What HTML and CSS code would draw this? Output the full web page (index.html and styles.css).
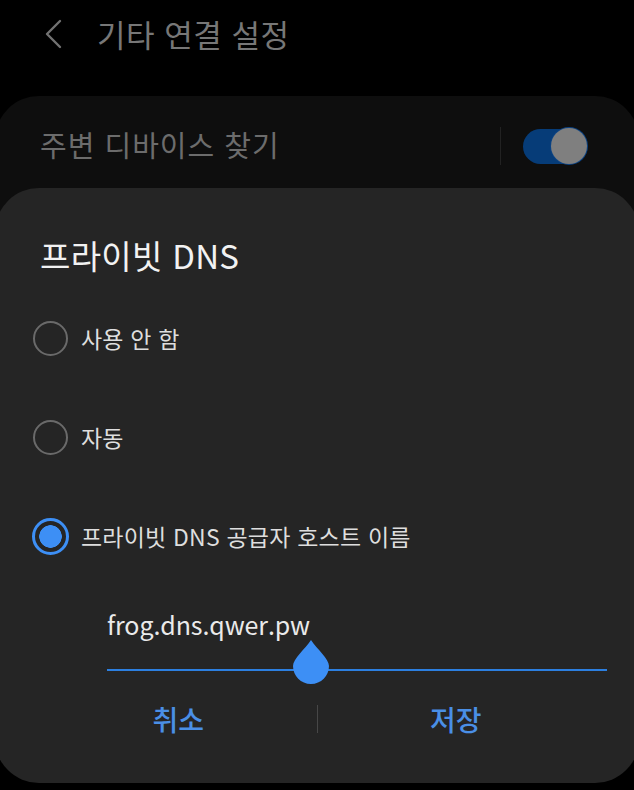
FILE: index.html
```html
<!DOCTYPE html>
<html lang="ko">
<head>
  <meta charset="utf-8" />
  <title>기타 연결 설정</title>
  <link rel="stylesheet" href="styles.css">
</head>

<body>
  <div class="screen">
    <!-- 상단 헤더 -->
    <div class="header">
      <svg class="back" width="22" height="32" viewBox="0 0 22 32">
        <path d="M18 3 L5 16 L18 29" fill="none" stroke="#727272" stroke-width="2.4" stroke-linecap="round" stroke-linejoin="round" />
      </svg>
      <span class="header-title">기타 연결 설정</span>
    </div>

    <!-- 뒤쪽 설정 카드 -->
    <div class="card">
      <div class="card-row">
        <span class="card-label">주변 디바이스 찾기</span>
        <div class="divider"></div>
        <div class="toggle">
          <div class="thumb"></div>
        </div>
      </div>
    </div>

    <!-- 프라이빗 DNS 대화상자 -->
    <div class="sheet-wrap">
      <div class="dialog">
        <div class="dialog-title">프라이빗 DNS</div>

        <div class="options">
          <div class="option">
            <span class="radio"></span>
            <span class="option-label">사용 안 함</span>
          </div>
          <div class="option">
            <span class="radio"></span>
            <span class="option-label">자동</span>
          </div>
          <div class="option">
            <span class="radio checked"></span>
            <span class="option-label">프라이빗 DNS 공급자 호스트 이름</span>
          </div>
        </div>

        <div class="field">
          <span class="field-text">frog.dns.qwer.pw</span>
          <svg class="handle" width="36" height="44" viewBox="0 0 36 44">
            <path d="M18 0 C24 9 36 19 36 26 C36 36 28 44 18 44 C8 44 0 36 0 26 C0 19 12 9 18 0 Z" fill="#3d8ff5" />
          </svg>
        </div>

        <div class="actions">
          <button class="action">취소</button>
          <div class="action-divider"></div>
          <button class="action">저장</button>
        </div>
      </div>
    </div>
  </div>
</body>
</html>
```

FILE: styles.css
```css
body {
  margin: 0;
  background: #000;
  font-family: "Noto Sans CJK KR", "Noto Sans", sans-serif;
  overflow: hidden;
}

.screen {
  width: 634px;
  height: 790px;
  overflow: hidden;
}

.header {
  height: 70px;
  display: flex;
  align-items: center;
  padding-left: 42px;
}

.header .back {
  margin-top: -2px;
}

.header-title {
  margin-left: 33px;
  font-size: 31px;
  letter-spacing: 0.5px;
  color: #777;
  line-height: 40px;
  margin-top: -2px;
}

.card {
  margin: 26px -5px 0;
  height: 92px;
  background: #0e0e0e;
  border-radius: 44px 44px 0 0;
}

.card-row {
  display: flex;
  align-items: center;
  height: 100px;
  padding: 0 52px 0 45px;
}

.card-label {
  flex: 1;
  font-size: 29px;
  letter-spacing: 1px;
  color: #6c6c6c;
  margin-top: -4px;
}

.divider {
  width: 1px;
  height: 38px;
  background: #222;
  margin-right: 22px;
}

.toggle {
  width: 64px;
  height: 35px;
  border-radius: 18px;
  background: #063c78;
  display: flex;
  align-items: center;
  justify-content: flex-end;
}

.thumb {
  width: 36px;
  height: 36px;
  border-radius: 50%;
  background: #7f7f7f;
  box-shadow: 0 0 0 1px #0b4384;
}

.sheet-wrap {
  background: linear-gradient(#0e0e0e 50%, #000 50%);
  margin: 0 -5px;
}

.dialog {
  background: #252525;
  border-radius: 44px;
  height: 595px;
  padding: 0 0 0 45px;
  box-sizing: border-box;
}

.dialog-title {
  padding-top: 47px;
  line-height: 40px;
  font-size: 33px;
  letter-spacing: 0.3px;
  color: #f2f2f2;
}

.options {
  margin-top: 14px;
}

.option {
  height: 99px;
  display: flex;
  align-items: center;
}

.radio {
  width: 31px;
  height: 31px;
  border-radius: 50%;
  border: 2px solid #6a6a6a;
  margin-left: -7px;
  margin-right: 13px;
  box-sizing: content-box;
}

.radio.checked {
  width: 31px;
  height: 31px;
  border: 3px solid #3d8ff5;
  margin-left: -8px;
  margin-right: 12px;
  background: radial-gradient(circle, #3d8ff5 11px, transparent 11.5px);
}

.option-label {
  font-size: 23px;
  letter-spacing: 0.2px;
  color: #dedede;
  margin-top: -2px;
}

.field {
  position: relative;
  margin: 24px 32px 0 67px;
  border-bottom: 2px solid #2c7fe0;
  padding-bottom: 23px;
  line-height: 32px;
}

.field-text {
  font-size: 25px;
  letter-spacing: -0.1px;
  color: #eaeaea;
  position: relative;
  top: -2px;
}

.handle {
  position: absolute;
  left: 186px;
  top: 30px;
}

.actions {
  display: flex;
  align-items: center;
  height: 96px;
  margin-right: 45px;
}

.action {
  flex: 1;
  background: none;
  border: none;
  padding: 0;
  font-family: inherit;
  font-size: 28px;
  font-weight: 500;
  color: #4a8fe6;
  cursor: pointer;
}

.action-divider {
  width: 1px;
  height: 28px;
  background: #474747;
}
```
